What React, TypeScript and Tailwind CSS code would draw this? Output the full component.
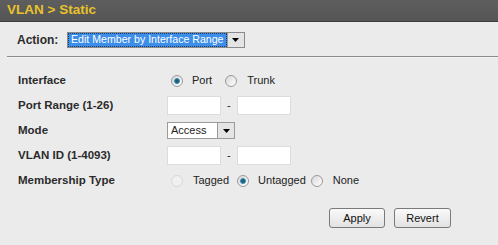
import React from 'react';

function Radio({ checked, disabled }: { checked?: boolean; disabled?: boolean }) {
  return (
    <span
      className={`inline-flex items-center justify-center w-[12px] h-[12px] rounded-full border ${
        disabled ? 'border-[#d8d8d8] bg-[#f0f0f0]' : 'border-[#9a9a9a] bg-gradient-to-br from-[#d8d8d8] to-[#ffffff]'
      }`}
    >
      {checked && <span className="w-[6px] h-[6px] rounded-full bg-[#1f5d7a] border border-[#3b8fb0]" />}
    </span>
  );
}

function Arrow() {
  return (
    <span className="flex items-center justify-center w-[17px] h-full border-l border-[#9a9a9a] bg-[#e4e4e4]">
      <svg width="7" height="4" viewBox="0 0 7 4">
        <path d="M0 0h7L3.5 4z" fill="#000" />
      </svg>
    </span>
  );
}

function TextBox() {
  return <span className="block w-[54px] h-[19px] bg-white border border-[#dcdcdc]" />;
}

export default function App() {
  const label = 'w-[150px] font-bold text-[11.5px] text-[#2b2b2b]';
  return (
    <div className="w-[498px] h-[245px] bg-[#ebebeb] text-[11px] text-[#222]" style={{ fontFamily: '"Liberation Sans", Arial, sans-serif' }}>
      {/* Header */}
      <div className="h-[22px] bg-gradient-to-b from-[#5e5e5e] to-[#555] border-b border-[#3c3c3c] flex items-center pl-[7px]">
        <span className="text-[13.5px] font-bold text-[#e8c22c]">VLAN &gt; Static</span>
      </div>

      {/* Action */}
      <div className="flex items-center h-[34px] pl-[17px] pt-[2px]">
        <span className="font-bold text-[12px] text-[#2b2b2b] w-[50px]">Action:</span>
        <span className="flex items-center h-[16px] border border-[#8a8a8a] bg-white">
          <span className="h-full px-[2px] flex items-center bg-[#3d8ee8] text-white text-[10.6px] border border-dotted border-[#1a3a6a]">
            Edit Member by Interface Range
          </span>
          <Arrow />
        </span>
      </div>
      <div className="ml-[7px] h-[2px] border-t border-[#8a8a8a] bg-[#f4f4f4]" />

      {/* Form */}
      <div className="pl-[18px] pt-[10px] flex flex-col">
        <div className="flex items-center h-[25px]">
          <span className={label}>Interface</span>
          <span className="flex items-center gap-[9px] pl-[3px]">
            <Radio checked />
            <span>Port</span>
          </span>
          <span className="flex items-center gap-[10px] pl-[13px]">
            <Radio />
            <span>Trunk</span>
          </span>
        </div>
        <div className="flex items-center h-[25px]">
          <span className={label}>Port Range (1-26)</span>
          <span className="-ml-[1px] flex items-center gap-[6px]">
            <TextBox />
            <span>-</span>
            <TextBox />
          </span>
        </div>
        <div className="flex items-center h-[25px]">
          <span className={label}>Mode</span>
          <span className="-ml-[1px] flex items-center h-[17px] w-[68px] border border-[#9a9a9a] bg-white">
            <span className="flex-1 pl-[3px]">Access</span>
            <Arrow />
          </span>
        </div>
        <div className="flex items-center h-[25px]">
          <span className={label}>VLAN ID (1-4093)</span>
          <span className="-ml-[1px] flex items-center gap-[6px]">
            <TextBox />
            <span>-</span>
            <TextBox />
          </span>
        </div>
        <div className="flex items-center h-[25px]">
          <span className={label}>Membership Type</span>
          <span className="flex items-center gap-[10px] pl-[3px]">
            <Radio disabled />
            <span>Tagged</span>
          </span>
          <span className="flex items-center gap-[9px] pl-[8px]">
            <Radio checked />
            <span>Untagged</span>
          </span>
          <span className="flex items-center gap-[10px] pl-[5px]">
            <Radio />
            <span>None</span>
          </span>
        </div>
      </div>

      {/* Buttons */}
      <div className="flex justify-end gap-[9px] pr-[47px] pt-[15px]">
        <button className="w-[56px] h-[20px] rounded-[3px] border border-[#7a7a7a] bg-gradient-to-b from-[#fafafa] to-[#e2e2e2] text-[11px] text-[#111]">
          Apply
        </button>
        <button className="w-[57px] h-[20px] rounded-[3px] border border-[#7a7a7a] bg-gradient-to-b from-[#fafafa] to-[#e2e2e2] text-[11px] text-[#111]">
          Revert
        </button>
      </div>
    </div>
  );
}
